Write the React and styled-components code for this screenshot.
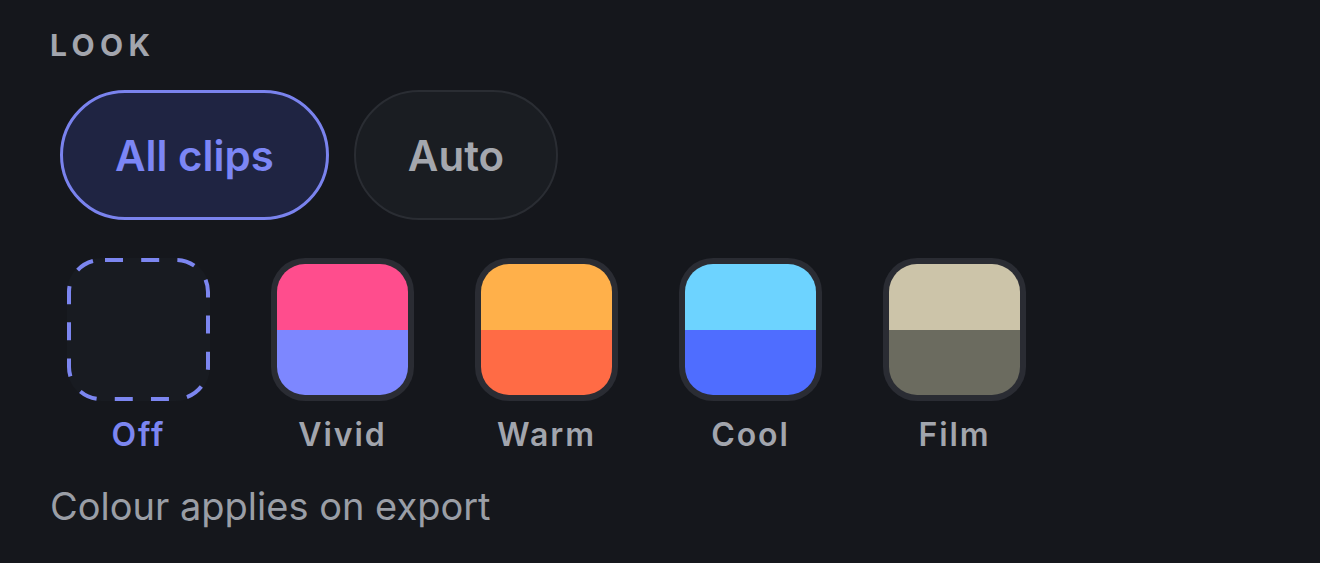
import React from "react";
import styled, { createGlobalStyle } from "styled-components";

const Global = createGlobalStyle`
  html, body { margin: 0; padding: 0; background: #15171c; }
  body { font-family: Inter, "Noto Sans", sans-serif; -webkit-font-smoothing: antialiased; }
`;

const Panel = styled.section`
  width: 1320px;
  height: 563px;
  box-sizing: border-box;
  padding: 27px 0 0 50px;
  background: #15171c;
  display: flex;
  flex-direction: column;
`;

const Heading = styled.h2`
  margin: 0;
  font-size: 30px;
  line-height: 36px;
  font-weight: 700;
  letter-spacing: 0.18em;
  color: #a2a5ad;
`;

const PillRow = styled.div`
  display: flex;
  gap: 25px;
  margin: 27px 0 0 10px;
`;

const Pill = styled.button`
  height: 130px;
  box-sizing: border-box;
  padding: 0 52px;
  border-radius: 65px;
  border: ${(p) => (p.$active ? "3px solid #7a83ee" : "2px solid #2a2d33")};
  background: ${(p) => (p.$active ? "#1f2442" : "#1a1d22")};
  color: ${(p) => (p.$active ? "#7c86f5" : "#a4a7ae")};
  font-family: Inter, sans-serif;
  font-size: 42px;
  font-weight: 600;
  display: flex;
  align-items: center;
  justify-content: center;
  cursor: pointer;
`;

const SwatchRow = styled.div`
  display: flex;
  gap: 27px;
  margin-top: 38px;
`;

const Item = styled.div`
  width: 177px;
  display: flex;
  flex-direction: column;
  align-items: center;
`;

const Tile = styled.div`
  width: 143px;
  height: 143px;
  box-sizing: border-box;
  border-radius: 34px;
  background: #2a2c33;
  padding: 6px;
  display: flex;
`;

const Split = styled.div`
  flex: 1;
  border-radius: 28px;
  overflow: hidden;
  display: flex;
  flex-direction: column;
`;

const Half = styled.div`
  flex: 1;
  background: ${(p) => p.$c};
`;

const OffTile = styled.div`
  width: 143px;
  height: 143px;
  border-radius: 34px;
  background: #181b21;
  svg { display: block; }
`;

const Label = styled.div`
  margin-top: 15px;
  font-size: 32px;
  line-height: 38px;
  font-weight: 600;
  letter-spacing: 0.06em;
  color: ${(p) => (p.$active ? "#7c86f0" : "#a2a5ad")};
`;

const Caption = styled.p`
  margin: 29px 0 0;
  font-size: 38px;
  line-height: 46px;
  font-weight: 400;
  color: #9a9ea6;
`;

const swatches = [
  { name: "Vivid", top: "#ff4d8d", bottom: "#7d87ff" },
  { name: "Warm", top: "#ffb04a", bottom: "#ff6b45" },
  { name: "Cool", top: "#6dd3ff", bottom: "#4f6dff" },
  { name: "Film", top: "#ccc4a9", bottom: "#6b6b5f" },
];

export default function App() {
  return (
    <>
      <Global />
      <Panel>
        <Heading>LOOK</Heading>
        <PillRow>
          <Pill $active>All clips</Pill>
          <Pill>Auto</Pill>
        </PillRow>
        <SwatchRow>
          <Item>
            <OffTile>
              <svg width="143" height="143" viewBox="0 0 143 143">
                <rect
                  x="2"
                  y="2"
                  width="139"
                  height="139"
                  rx="32"
                  fill="none"
                  stroke="#7c86f0"
                  strokeWidth="4"
                  strokeDasharray="18 18.2"
                  strokeDashoffset="-4"
                />
              </svg>
            </OffTile>
            <Label $active>Off</Label>
          </Item>
          {swatches.map((s) => (
            <Item key={s.name}>
              <Tile>
                <Split>
                  <Half $c={s.top} />
                  <Half $c={s.bottom} />
                </Split>
              </Tile>
              <Label>{s.name}</Label>
            </Item>
          ))}
        </SwatchRow>
        <Caption>Colour applies on export</Caption>
      </Panel>
    </>
  );
}
